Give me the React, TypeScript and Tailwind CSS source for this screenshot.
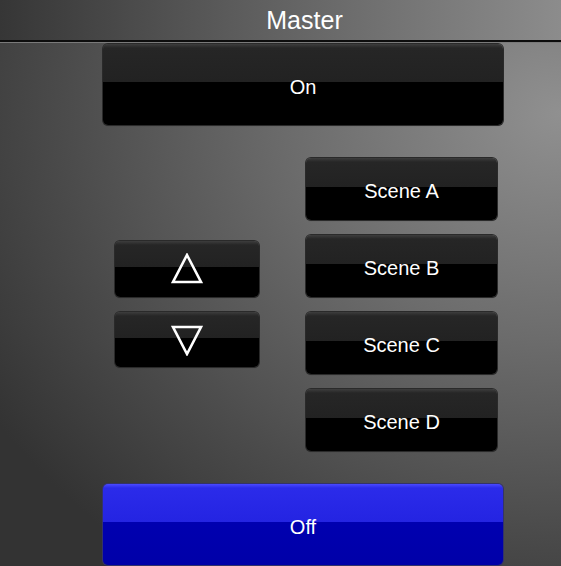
import React from 'react';

const font = { fontFamily: '"Liberation Sans", Arial, sans-serif' };

const Btn = ({ className = '', blue = false, children }: { className?: string; blue?: boolean; children: React.ReactNode }) => (
  <button
    className={`flex items-center justify-center rounded-[5px] pt-[4px] text-[20px] text-white ${
      blue
        ? 'bg-[linear-gradient(to_bottom,#4a4aff_0px,#2b2bea_4px,#2424e2_47%,#0000b0_47%,#0000a8_100%)] shadow-[0_0_0_1px_#33336a]'
        : 'bg-[linear-gradient(to_bottom,#3d3d3d_0px,#262626_4px,#222222_47%,#000000_47%,#000000_100%)] shadow-[0_0_0_1px_#2a2a2a,0_1px_1px_rgba(0,0,0,0.35)]'
    } ${className}`}
  >
    {children}
  </button>
);

const Triangle = ({ down = false }: { down?: boolean }) => (
  <svg width="32" height="32" viewBox="0 0 32 32" fill="none" className="-mt-[4px]">
    <polygon
      points={down ? '2,3 30,3 16,30' : '16,2 30,29 2,29'}
      stroke="white"
      strokeWidth="2.6"
      strokeLinejoin="miter"
    />
  </svg>
);

export default function App() {
  return (
    <div
      style={font}
      className="flex h-[566px] w-[561px] flex-col overflow-hidden bg-[radial-gradient(ellipse_120%_100%_at_100%_20%,#909090_0%,#6c6c6c_40%,#4a4a4a_75%,#333333_100%)]"
    >
      {/* Header */}
      <div className="flex h-[42px] shrink-0 items-center justify-center border-b-2 border-[#0d0d0d] bg-[linear-gradient(to_right,#363636,#5a5a5a_40%,#8c8c8c)] pl-[48px] shadow-[0_1px_0_#7a7a7a]">
        <span className="text-[25px] leading-none text-white">Master</span>
      </div>

      <Btn className="ml-[103px] mt-[2px] h-[81px] w-[400px] shrink-0">On</Btn>

      <div className="flex shrink-0">
        <div className="ml-[115px] mt-[116px] flex w-[144px] flex-col gap-[15px]">
          <Btn className="h-[56px]">
            <Triangle />
          </Btn>
          <Btn className="h-[55px]">
            <Triangle down />
          </Btn>
        </div>
        <div className="ml-[47px] mt-[33px] flex w-[191px] flex-col gap-[15px]">
          <Btn className="h-[62px]">Scene A</Btn>
          <Btn className="h-[62px]">Scene B</Btn>
          <Btn className="h-[62px]">Scene C</Btn>
          <Btn className="h-[62px]">Scene D</Btn>
        </div>
      </div>

      <Btn blue className="ml-[103px] mt-[33px] h-[81px] w-[400px] shrink-0">
        Off
      </Btn>
    </div>
  );
}
